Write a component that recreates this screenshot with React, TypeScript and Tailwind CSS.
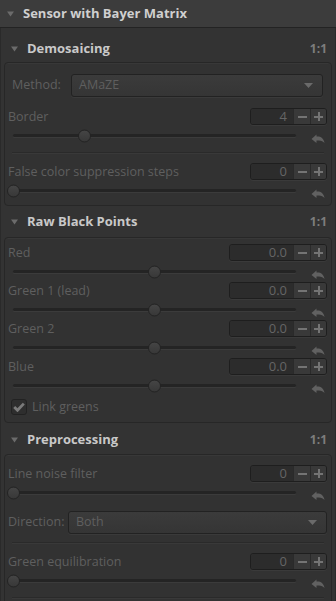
import React from "react";

const Tri = ({ c = "#6b6b6b" }: { c?: string }) => (
  <svg width="7" height="6" viewBox="0 0 7 6" className="shrink-0">
    <path d="M0 0.5 H7 L3.5 5.5 Z" fill={c} />
  </svg>
);

const ResetIcon = () => (
  <svg width="14" height="11" viewBox="0 0 14 11" className="shrink-0">
    <path
      d="M0.5 6 L5.5 1.5 L5.5 3.6 C9.5 3.2 12.5 5 13.5 10 C11.8 7.8 9.5 7 5.5 7.6 L5.5 10 Z"
      fill="#616161"
    />
  </svg>
);

function Spin({ value, w }: { value: string; w: string }) {
  return (
    <div
      className={`flex h-[17px] ${w} border border-[#1e1e1e] rounded-[3px] overflow-hidden shadow-[0_1px_0_#3a3a3a]`}
    >
      <div className="flex-1 bg-[#2c2c2c] text-right pr-[6px] text-[13px] leading-[15px] text-[#656565]">
        {value}
      </div>
      <div className="w-[17px] bg-[#393939] border-l border-[#2a2a2a] flex items-center justify-center">
        <div className="w-[9px] h-[2px] bg-[#747474]" />
      </div>
      <div className="w-[16px] bg-[#393939] border-l border-[#2a2a2a] flex items-center justify-center relative">
        <div className="w-[9px] h-[2px] bg-[#747474]" />
        <div className="absolute w-[2px] h-[9px] bg-[#747474]" />
      </div>
    </div>
  );
}

function Slider({ pos }: { pos: number }) {
  return (
    <div className="flex items-center h-[21px]">
      <div className="relative ml-[2px] w-[295px] h-full flex items-center">
        <div className="mx-[6px] flex-1 h-[3px] rounded-full bg-[#242424] shadow-[0_1px_0_#3b3b3b]" />
        <div
          className="absolute top-1/2 -translate-y-1/2 w-[13px] h-[13px] rounded-full bg-gradient-to-b from-[#454545] to-[#383838] border border-[#232323]"
          style={{ left: `${pos * 282}px` }}
        />
      </div>
      <div className="ml-[9px] pt-[5px]">
        <ResetIcon />
      </div>
    </div>
  );
}

function Adjuster({
  label,
  value,
  pos,
  wide,
}: {
  label: string;
  value: string;
  pos: number;
  wide?: boolean;
}) {
  return (
    <div>
      <div className="flex items-center justify-between h-[17px] pl-[3px] pr-[4px]">
        <span className="text-[12.5px] text-[#5f5f5f] leading-[17px]">{label}</span>
        <Spin value={value} w={wide ? "w-[98px]" : "w-[77px]"} />
      </div>
      <Slider pos={pos} />
    </div>
  );
}

function Select({ value, w }: { value: string; w: string }) {
  return (
    <div
      className={`${w} h-[23px] rounded-[3px] border border-[#222] bg-gradient-to-b from-[#3b3b3b] to-[#353535] flex items-center justify-between pl-[7px] pr-[9px] shadow-[0_1px_0_#3a3a3a]`}
    >
      <span className="text-[12.5px] text-[#5f5f5f]">{value}</span>
      <svg width="9" height="5" viewBox="0 0 9 5">
        <path d="M0 0 H9 L4.5 5 Z" fill="#6a6a6a" />
      </svg>
    </div>
  );
}

const Sep = () => <div className="mx-[7px] h-[1px] bg-[#2a2a2a] shadow-[0_1px_0_#393939]" />;

function SectionHeader({ title }: { title: string }) {
  return (
    <div className="flex items-center h-[16px] pl-[7px] pr-[5px]">
      <Tri />
      <span className="ml-[9px] font-bold text-[13px] text-[#c9c9c9]">{title}</span>
      <span className="ml-auto font-bold text-[12px] text-[#7d7d7d]">1:1</span>
    </div>
  );
}

function Box({ children, className = "" }: { children: React.ReactNode; className?: string }) {
  return (
    <div
      className={`border border-[#272727] rounded-[4px] bg-[#323232] shadow-[inset_0_1px_0_#383838] ${className}`}
    >
      {children}
    </div>
  );
}

export default function App() {
  return (
    <div className="w-[336px] h-[601px] overflow-hidden bg-[#333333] font-['Open_Sans','Noto_Sans','Liberation_Sans',sans-serif]">
      <div className="h-[28px] bg-[#3c3c3c] border-b border-[#232323] flex items-center pl-[7px]">
        <Tri />
        <span className="ml-[9px] font-bold text-[13px] text-[#cfcfcf]">
          Sensor with Bayer Matrix
        </span>
      </div>
      <div className="border-x border-[#2a2a2a] h-full px-[3px]">
        {/* Demosaicing */}
        <div className="pt-[13px] pb-[5px]">
          <SectionHeader title="Demosaicing" />
        </div>
        <Box className="pt-[11px] h-[144px]">
          <div className="flex items-center pl-[7px] pr-[8px] justify-between">
            <span className="text-[12.5px] text-[#5f5f5f]">Method:</span>
            <Select value="AMaZE" w="w-[252px]" />
          </div>
          <div className="mt-[11px]">
            <Adjuster label="Border" value="4" pos={0.25} />
          </div>
          <div className="mt-[6px] mb-[10px]">
            <Sep />
          </div>
          <Adjuster label="False color suppression steps" value="0" pos={0} />
        </Box>

        {/* Raw Black Points */}
        <div className="pt-[8px] pb-[7px]">
          <SectionHeader title="Raw Black Points" />
        </div>
        <Box className="pt-[6px] h-[186px]">
          <Adjuster label="Red" value="0.0" pos={0.5} wide />
          <Adjuster label="Green 1 (lead)" value="0.0" pos={0.5} wide />
          <Adjuster label="Green 2" value="0.0" pos={0.5} wide />
          <Adjuster label="Blue" value="0.0" pos={0.5} wide />
          <div className="flex items-center mt-[2px] pl-[6px]">
            <div className="w-[16px] h-[16px] rounded-[3px] border border-[#222] bg-[#2e2e2e] flex items-center justify-center">
              <svg width="12" height="10" viewBox="0 0 12 10">
                <path d="M1.2 5 L4.5 8.3 L10.8 1.6" stroke="#7a7a7a" strokeWidth="2.8" fill="none" />
              </svg>
            </div>
            <span className="ml-[5px] text-[12.5px] text-[#5f5f5f]">Link greens</span>
          </div>
        </Box>

        {/* Preprocessing */}
        <div className="pt-[9px] pb-[6px]">
          <SectionHeader title="Preprocessing" />
        </div>
        <Box className="pt-[10px] h-[200px]">
          <Adjuster label="Line noise filter" value="0" pos={0} />
          <div className="flex items-center pl-[3px] pr-[4px] justify-between mt-[8px]">
            <span className="text-[12.5px] text-[#5f5f5f]">Direction:</span>
            <Select value="Both" w="w-[259px]" />
          </div>
          <div className="mt-[8px] mb-[10px]">
            <Sep />
          </div>
          <Adjuster label="Green equilibration" value="0" pos={0} />
          <div className="mt-[6px]">
            <Sep />
          </div>
        </Box>
      </div>
    </div>
  );
}
